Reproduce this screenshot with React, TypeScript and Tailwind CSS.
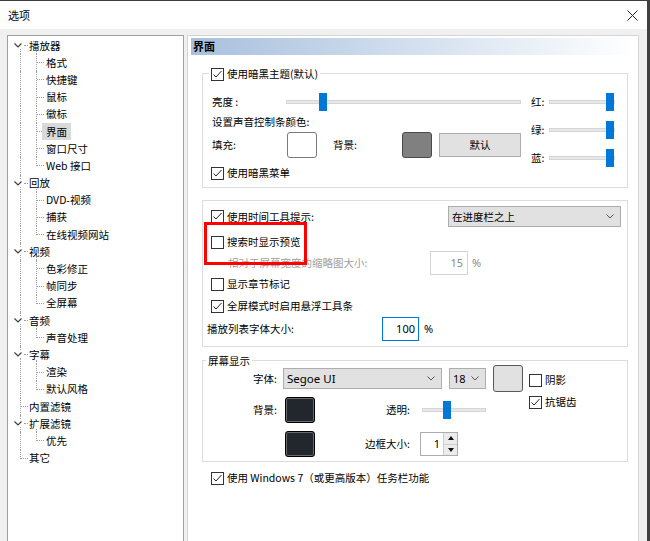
type Node = { t: string; l: 0 | 1; open?: boolean; sel?: boolean };

const tree: Node[] = [
  { t: "播放器", l: 0, open: true },
  { t: "格式", l: 1 },
  { t: "快捷键", l: 1 },
  { t: "鼠标", l: 1 },
  { t: "徽标", l: 1 },
  { t: "界面", l: 1, sel: true },
  { t: "窗口尺寸", l: 1 },
  { t: "Web 接口", l: 1 },
  { t: "回放", l: 0, open: true },
  { t: "DVD-视频", l: 1 },
  { t: "捕获", l: 1 },
  { t: "在线视频网站", l: 1 },
  { t: "视频", l: 0, open: true },
  { t: "色彩修正", l: 1 },
  { t: "帧同步", l: 1 },
  { t: "全屏幕", l: 1 },
  { t: "音频", l: 0, open: true },
  { t: "声音处理", l: 1 },
  { t: "字幕", l: 0, open: true },
  { t: "渲染", l: 1 },
  { t: "默认风格", l: 1 },
  { t: "内置滤镜", l: 0 },
  { t: "扩展滤镜", l: 0, open: true },
  { t: "优先", l: 1 },
  { t: "其它", l: 0 },
];

const dot = "absolute border-dotted border-[#a0a0a0]";

function TreeRow({ item, first, last, lastChild }: { item: Node; first: boolean; last: boolean; lastChild: boolean }) {
  return (
    <div className={`relative flex h-[17.2px] items-center ${item.l === 0 ? "pl-[21px]" : "pl-[34px]"}`}>
      {item.l === 1 && <span className={`${dot} left-[12px] top-0 h-full border-l`} />}
      {item.l === 0 && item.open && !first && <span className={`${dot} left-[12px] top-0 h-[4px] border-l`} />}
      {item.l === 0 && item.open && <span className={`${dot} bottom-0 left-[12px] top-[12px] border-l`} />}
      {item.l === 0 && !item.open && <span className={`${dot} left-[12px] top-0 border-l ${last ? "h-[9px]" : "h-full"}`} />}
      {item.l === 0 && item.open && <span className={`${dot} bottom-0 left-[28px] top-[14px] border-l`} />}
      {item.l === 1 && <span className={`${dot} left-[28px] top-0 border-l ${lastChild ? "h-[9px]" : "h-full"}`} />}
      {item.l === 0 && item.open && <span className={`${dot} left-[16px] top-[8px] w-[4px] border-t`} />}
      {item.l === 0 && !item.open && <span className={`${dot} left-[13px] top-[8px] w-[7px] border-t`} />}
      {item.l === 1 && <span className={`${dot} left-[29px] top-[8px] w-[7px] border-t`} />}
      {item.open && (
        <svg className="absolute left-[6px] top-[6px]" width="8" height="5" viewBox="0 0 8 5">
          <path d="M0.5 0.5L4 4L7.5 0.5" fill="none" stroke="#404040" strokeWidth="1.2" />
        </svg>
      )}
      <span className={`relative flex h-full items-center ${item.l === 1 ? "px-[4px]" : ""} ${item.sel ? "bg-[#d9d9d9]" : ""}`}>
        {item.t}
      </span>
    </div>
  );
}

function Check({ checked }: { checked?: boolean }) {
  return (
    <span className="flex h-[13px] w-[13px] shrink-0 items-center justify-center border border-[#333] bg-white">
      {checked && (
        <svg width="11" height="11" viewBox="0 0 11 11">
          <path d="M1.5 5.5L4 8L9.5 2" fill="none" stroke="#222" strokeWidth="1" />
        </svg>
      )}
    </span>
  );
}

function CheckRow({ checked, label, className }: { checked?: boolean; label: string; className?: string }) {
  return (
    <div className={`flex h-[16px] items-center gap-[3px] ${className ?? ""}`}>
      <Check checked={checked} />
      <span className="whitespace-nowrap">{label}</span>
    </div>
  );
}

function Slider({ w, thumb }: { w: string; thumb: string }) {
  return (
    <div className={`relative h-[18px] shrink-0 ${w}`}>
      <div className="absolute left-0 right-0 top-[7px] h-[4px] border border-[#d6d6d6] bg-[#e7e7e7]" />
      <div className={`absolute top-0 h-[18px] w-[8px] bg-[#0078d7] ${thumb}`} />
    </div>
  );
}

function Select({ w, text, ml }: { w: string; text: string; ml?: string }) {
  return (
    <div className={`flex h-[21px] shrink-0 items-center justify-between border border-[#adadad] bg-[#e1e1e1] pl-[3px] pr-[6px] ${w} ${ml ?? ""}`}>
      <span>{text}</span>
      <svg width="8" height="5" viewBox="0 0 8 5">
        <path d="M0.5 0.5L4 4L7.5 0.5" fill="none" stroke="#555" strokeWidth="1" />
      </svg>
    </div>
  );
}

function DarkBox() {
  return <div className="ml-[8px] h-[26px] w-[30px] shrink-0 rounded-[3px] border border-black bg-[#22262d] shadow-[inset_0_0_0_1px_#6b6b6b]" />;
}

export default function App() {
  return (
    <div className="flex h-[541px] w-[650px] flex-col overflow-hidden border-t border-r-[3px] border-t-[#3c3c3c] border-r-[#404040] bg-[#f0f0f0] font-['Noto_Sans_CJK_SC',sans-serif] text-[10.5px] leading-[16px] text-black">
      <div className="flex h-[28px] shrink-0 items-center justify-between bg-white pl-[8px] pr-[9px]">
        <span className="text-[11px]">选项</span>
        <svg width="11" height="11" viewBox="0 0 11 11">
          <path d="M0.5 0.5L10.5 10.5M10.5 0.5L0.5 10.5" stroke="#222" strokeWidth="1" />
        </svg>
      </div>

      <div className="flex gap-[3px] pl-[7px] pt-[6px]">
        <div className="h-[520px] w-[177px] shrink-0 border border-[#a0a0a0] bg-white pt-[1px]">
          {tree.map((item, i) => (
            <TreeRow
              key={i}
              item={item}
              first={i === 0}
              last={i === tree.length - 1}
              lastChild={item.l === 1 && (i === tree.length - 1 || tree[i + 1].l === 0)}
            />
          ))}
        </div>

        <div className="h-[520px] w-[452px] shrink-0 border border-[#d5d5d5] bg-white">
          <div className="mx-[3px] mt-[2px] h-[17px] bg-linear-to-r from-[#a8c0dd] to-white pl-[2px] text-[11px] font-bold leading-[17px]">界面</div>

          {/* dark theme group */}
          <div className="relative ml-[14px] mt-[18px] flex h-[115px] w-[426px] border border-[#dcdcdc]">
            <div className="absolute -top-[8px] left-[6px] bg-white px-[2px]">
              <CheckRow checked label="使用暗黑主题(默认)" />
            </div>
            <div className="ml-[8px] flex w-[310px] flex-col">
              <div className="mt-[19px] flex h-[18px] items-center">
                <span className="w-[75px] pl-[1px]">亮度 :</span>
                <Slider w="w-[235px]" thumb="left-[33px]" />
              </div>
              <div className="mt-[3px] h-[16px] pl-[1px]">设置声音控制条颜色:</div>
              <div className="mt-[2px] flex h-[26px] items-center">
                <span className="w-[76px] pl-[1px]">填充:</span>
                <div className="h-[26px] w-[30px] rounded-[3px] border border-[#7a7a7a] bg-white" />
                <span className="ml-[16px] w-[69px]">背景:</span>
                <div className="h-[26px] w-[30px] rounded-[3px] border border-[#4a4a4a] bg-[#808080]" />
                <div className="ml-[7px] flex h-[24px] w-[82px] items-center justify-center border border-[#adadad] bg-[#e1e1e1]">默认</div>
              </div>
              <CheckRow checked label="使用暗黑菜单" className="mt-[7px]" />
            </div>
            <div className="ml-[10px] flex flex-col">
              <div className="mt-[19px] flex h-[18px] items-center">
                <span className="w-[18px]">红:</span>
                <Slider w="w-[66px]" thumb="left-[57px]" />
              </div>
              <div className="mt-[10px] flex h-[18px] items-center">
                <span className="w-[18px]">绿:</span>
                <Slider w="w-[66px]" thumb="left-[57px]" />
              </div>
              <div className="mt-[10px] flex h-[18px] items-center">
                <span className="w-[18px]">蓝:</span>
                <Slider w="w-[66px]" thumb="left-[57px]" />
              </div>
            </div>
          </div>

          {/* tooltip / preview group */}
          <div className="relative ml-[14px] mt-[12px] flex h-[147px] w-[426px] flex-col border border-[#dcdcdc] pl-[8px]">
            <div className="mt-[5px] flex h-[21px] items-center">
              <CheckRow checked label="使用时间工具提示:" />
              <Select w="w-[173px]" text="在进度栏之上" ml="ml-auto mr-[6px]" />
            </div>
            <CheckRow label="搜索时显示预览" className="mt-[7px]" />
            <div className="mt-[1px] flex h-[24px] items-center text-[#a0a0a0]">
              <span className="w-[219px] pl-[17px]">相对于屏幕宽度的缩略图大小:</span>
              <div className="flex h-[24px] w-[38px] items-center justify-end border border-[#d4d4d4] pr-[4px] font-['Noto_Sans',sans-serif] text-[11px] text-[#8a8a8a]">15</div>
              <span className="ml-[4px] font-['Noto_Sans',sans-serif] text-[11px] text-[#8a8a8a]">%</span>
            </div>
            <CheckRow label="显示章节标记" className="mt-[1px]" />
            <CheckRow checked label="全屏模式时启用悬浮工具条" className="mt-[6px]" />
            <div className="-ml-[4px] mt-[3px] flex h-[24px] items-center">
              <span className="w-[175px]">播放列表字体大小:</span>
              <div className="flex h-[24px] w-[37px] items-center justify-end border border-[#0078d7] pr-[3px] font-['Noto_Sans',sans-serif] text-[11px]">100</div>
              <span className="ml-[5px] font-['Noto_Sans',sans-serif] text-[11px]">%</span>
            </div>
            <div className="absolute left-[1px] top-[21px] h-[43px] w-[103px] border-[3px] border-[#ff0000]" />
          </div>

          {/* OSD group */}
          <div className="relative ml-[14px] mt-[13px] flex h-[102px] w-[426px] border border-[#dcdcdc]">
            <span className="absolute -top-[8px] left-[3px] bg-white px-[2px]">屏幕显示</span>
            <div className="flex flex-col">
              <div className="mt-[4px] flex h-[27px] items-center">
                <span className="w-[74px] text-right">字体:</span>
                <Select w="w-[159px]" text="Segoe UI" ml="ml-[6px] font-['Noto_Sans',sans-serif] text-[11.5px]" />
                <Select w="w-[37px]" text="18" ml="ml-[7px] font-['Noto_Sans',sans-serif] text-[11px]" />
                <div className="ml-[7px] h-[27px] w-[30px] rounded-[3px] border border-[#5a5a5a] bg-[#e1e1e1]" />
              </div>
              <div className="mt-[5px] flex h-[26px] items-center">
                <span className="w-[74px] text-right">背景:</span>
                <DarkBox />
                <span className="w-[95px] text-right">透明:</span>
                <div className="ml-[12px]">
                  <Slider w="w-[64px]" thumb="left-[21px]" />
                </div>
              </div>
              <div className="mt-[8px] flex h-[26px] items-center">
                <span className="w-[74px]" />
                <DarkBox />
                <span className="w-[95px] text-right">边框大小:</span>
                <div className="ml-[10px] flex h-[24px] w-[38px] border border-[#adadad] bg-white">
                  <span className="flex-1 pr-[3px] text-right font-['Noto_Sans',sans-serif] text-[11px] leading-[22px]">1</span>
                  <div className="flex w-[14px] flex-col border-l border-[#cfcfcf]">
                    <span className="flex flex-1 items-center justify-center border-b border-[#cfcfcf] bg-[#ececec]">
                      <svg width="6" height="4" viewBox="0 0 6 4">
                        <path d="M0 4L3 0L6 4Z" fill="#111" />
                      </svg>
                    </span>
                    <span className="flex flex-1 items-center justify-center bg-[#ececec]">
                      <svg width="6" height="4" viewBox="0 0 6 4">
                        <path d="M0 0L3 4L6 0Z" fill="#111" />
                      </svg>
                    </span>
                  </div>
                </div>
              </div>
            </div>
            <div className="ml-[6px] flex flex-col">
              <CheckRow label="阴影" className="mt-[11px]" />
              <CheckRow checked label="抗锯齿" className="mt-[6px]" />
            </div>
          </div>

          <CheckRow checked label="使用 Windows 7（或更高版本）任务栏功能" className="ml-[23px] mt-[8px]" />
        </div>
      </div>
    </div>
  );
}
